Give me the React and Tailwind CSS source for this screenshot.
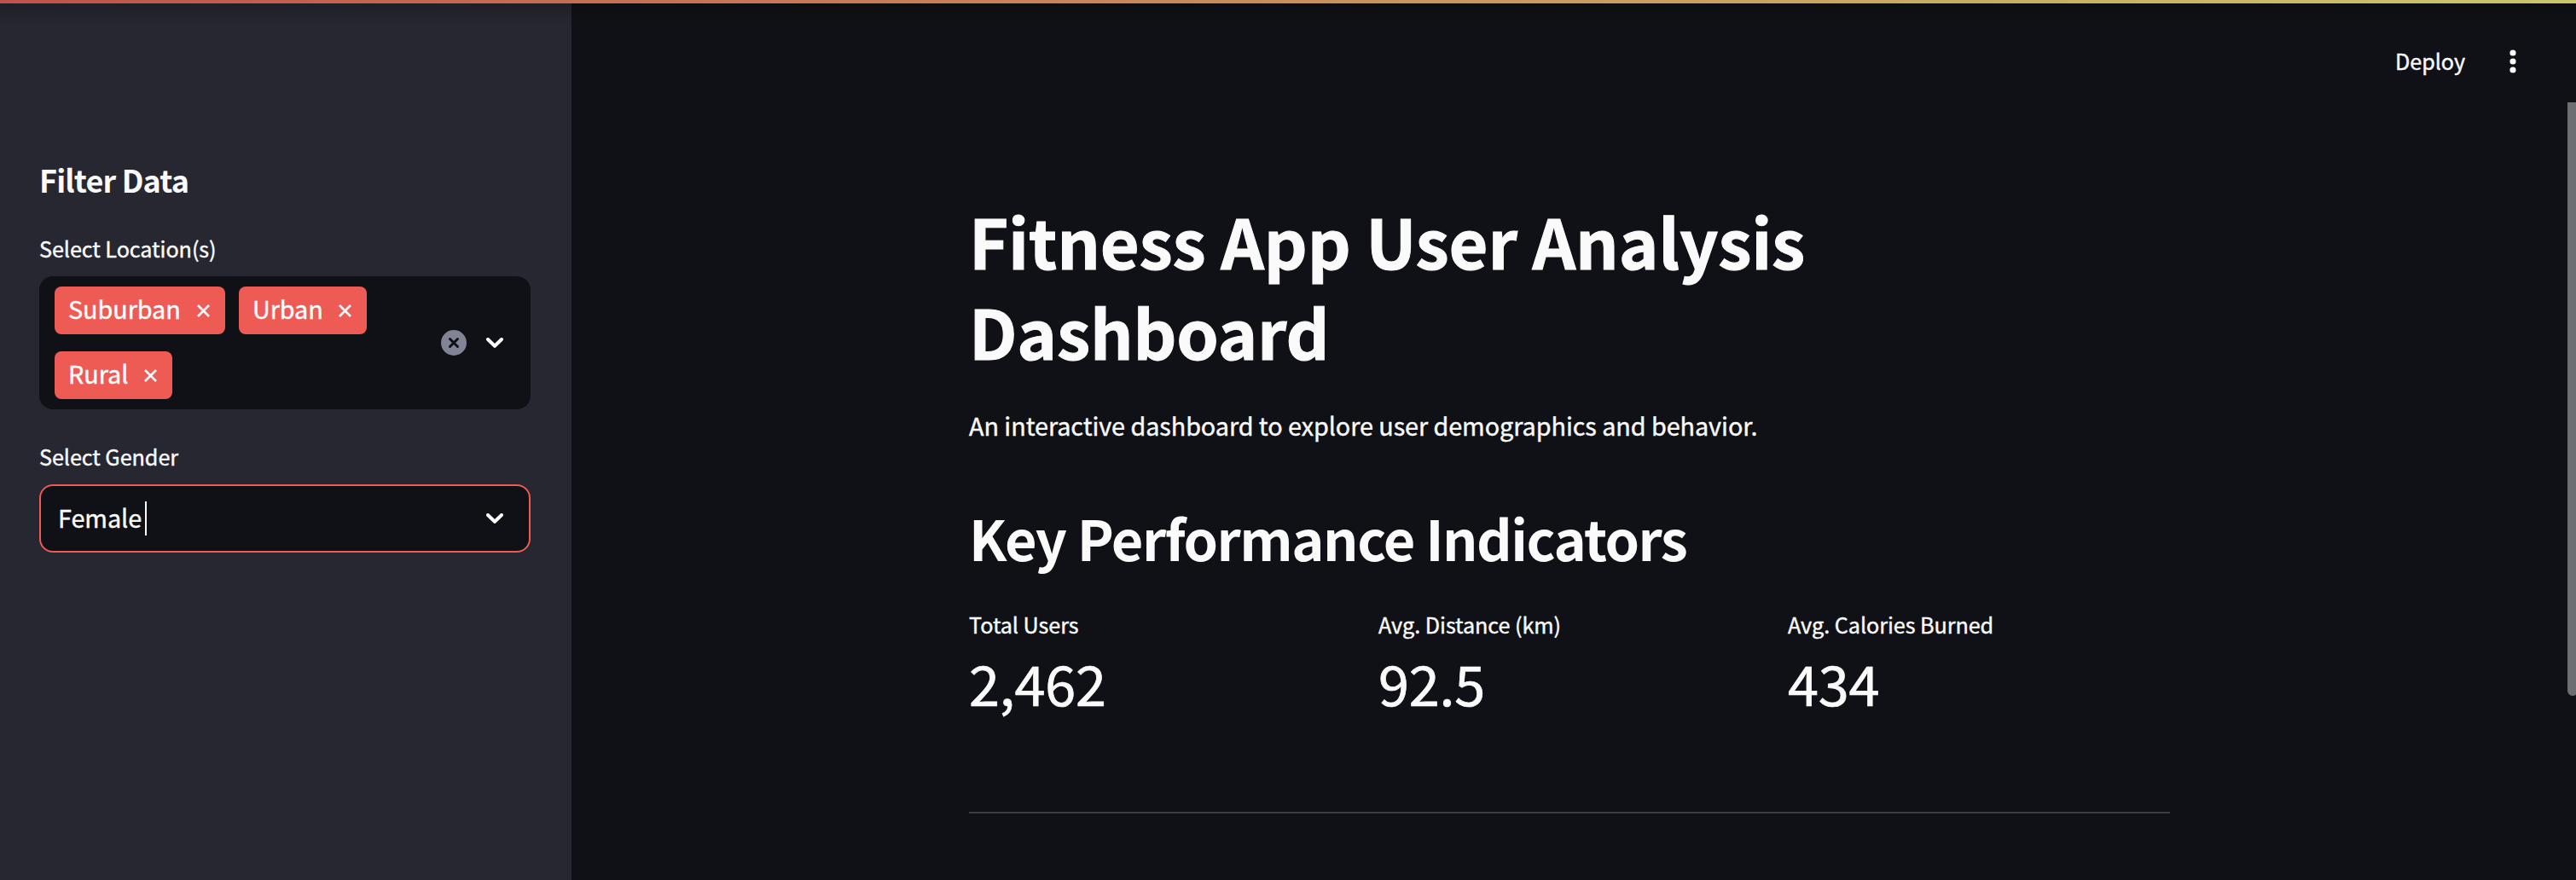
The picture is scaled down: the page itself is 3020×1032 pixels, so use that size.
import React from "react";

function CloseIcon() {
  return (
    <svg width="16" height="16" viewBox="0 0 16 16" fill="none" stroke="currentColor" strokeWidth="2.6" className="shrink-0">
      <path d="M1 2L14 15M14 2L1 15" />
    </svg>
  );
}

function Chevron() {
  return (
    <svg width="20" height="12" viewBox="0 0 20 12" fill="none" stroke="#fafafa" strokeWidth="4" strokeLinecap="round" strokeLinejoin="round" className="shrink-0">
      <path d="M2 2L10 9.8L18 2" />
    </svg>
  );
}

function Tag({ label, width }) {
  return (
    <span className={`flex h-14 items-center justify-between rounded-lg bg-[#ee5a54] pr-[17px] pl-4 text-[28.8px] leading-14 text-white ${width}`}>
      <span className="-mt-[5px]">{label}</span>
      <CloseIcon />
    </span>
  );
}

function Metric({ label, value }) {
  return (
    <div>
      <div className="text-[25.2px] leading-10">{label}</div>
      <div className="mt-[5px] text-[64.8px] leading-[86px] tracking-[-0.2px] [-webkit-text-stroke:0.7px]">{value}</div>
    </div>
  );
}

export default function App() {
  return (
    <div className="relative flex h-[1032px] w-[3020px] overflow-hidden bg-[#101116] font-['Noto_Sans_CJK_SC',sans-serif] tracking-[-0.06px] text-[#fafafa] [-webkit-text-stroke:0.4px]">
      <aside className="w-[670px] shrink-0 bg-[#262730] pr-12 pl-[46px] pt-[186px]">
        <h2 className="text-[36px] leading-12 font-bold tracking-[-0.85px] [-webkit-text-stroke:0px]">Filter Data</h2>
        <div className="mt-[37px] text-[25.2px] leading-10">Select Location(s)</div>
        <div className="mt-[13px] flex h-[156px] items-center rounded-2xl bg-[#101116] pr-8 pl-[18px]">
          <div className="flex flex-1 flex-wrap gap-x-4 gap-y-5">
            <Tag label="Suburban" width="w-[200px]" />
            <Tag label="Urban" width="w-[150px]" />
            <Tag label="Rural" width="w-[138px]" />
          </div>
          <svg width="30" height="30" viewBox="0 0 30 30" className="mr-[23px] shrink-0">
            <circle cx="15" cy="15" r="15" fill="#808495" />
            <path d="M10.5 10.5L19.5 19.5M19.5 10.5L10.5 19.5" stroke="#101116" strokeWidth="3" strokeLinecap="round" />
          </svg>
          <Chevron />
        </div>
        <div className="mt-[35px] text-[25.2px] leading-10">Select Gender</div>
        <div className="mt-[13px] flex h-20 items-center rounded-2xl border-2 border-[#ee5a54] bg-[#101116] pr-[30px] pl-5">
          <span className="-mt-[3px] text-[28.8px] leading-10">Female</span>
          <span className="mr-auto ml-1 h-10 w-0.5 bg-[#fafafa]" />
          <Chevron />
        </div>
      </aside>

      <main className="flex-1">
        <header className="flex h-[120px] items-start justify-end pt-[51px] pr-[70px]">
          <span className="text-[25.2px] leading-10">Deploy</span>
          <svg width="8" height="28" viewBox="0 0 8 28" fill="#fafafa" className="mt-[7px] ml-[52px]">
            <circle cx="4" cy="4" r="3.6" />
            <circle cx="4" cy="14" r="3.6" />
            <circle cx="4" cy="24" r="3.6" />
          </svg>
        </header>
        <div className="ml-[466px] w-[1408px] pt-[109px]">
          <h1 className="text-[79.2px] leading-[105.6px] font-bold tracking-[-0.2px] [-webkit-text-stroke:1px]">Fitness App User Analysis<br />Dashboard</h1>
          <p className="mt-[35px] text-[28.8px] leading-12 tracking-[-0.07px]">An interactive dashboard to explore user demographics and behavior.</p>
          <h2 className="mt-16 text-[64.8px] leading-[86px] font-bold tracking-[-1.5px] [-webkit-text-stroke:0px]">Key Performance Indicators</h2>
          <div className="mt-[39px] grid grid-cols-3 gap-8">
            <Metric label="Total Users" value="2,462" />
            <Metric label="Avg. Distance (km)" value="92.5" />
            <Metric label="Avg. Calories Burned" value="434" />
          </div>
          <hr className="mt-[109px] border-t-2 border-[#3d3e43]" />
        </div>
      </main>

      <div className="absolute inset-x-0 top-1 h-7 bg-linear-to-b from-black/20 to-transparent" />
      <div className="absolute inset-x-0 top-0 h-1 bg-linear-to-r from-[#c0524b] to-[#c8c66c]" />
      <div className="absolute top-[120px] -right-0.5 h-[696px] w-3 rounded-b-full bg-[#6d6e72]" />
    </div>
  );
}
